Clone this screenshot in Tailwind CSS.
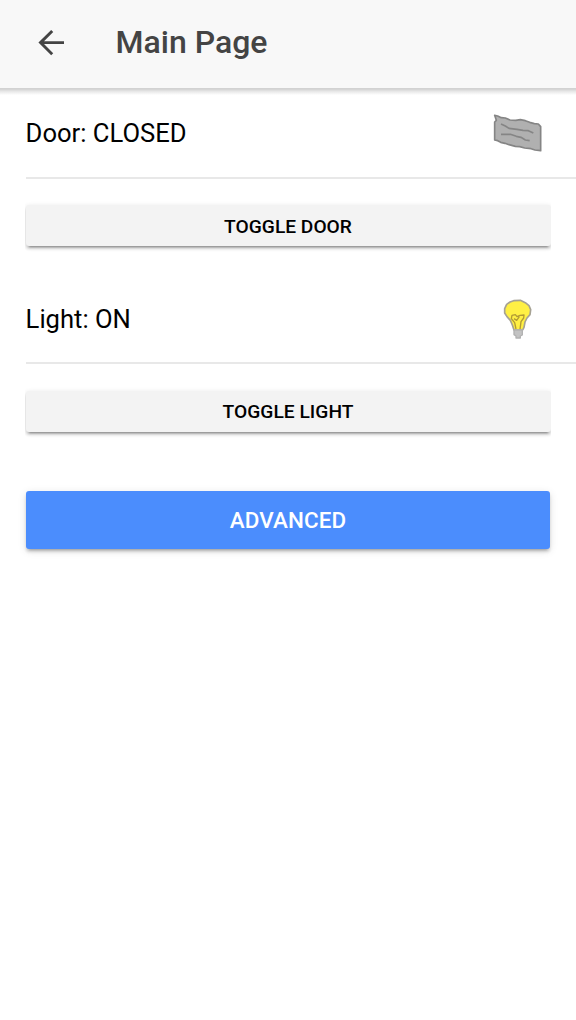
<!DOCTYPE html>
<html lang="en">
<head>
<meta charset="utf-8">
<title>Main Page</title>
<script src="https://cdn.jsdelivr.net/npm/@tailwindcss/browser@4"></script>
</head>
<body class="bg-white text-black font-[Roboto,sans-serif] min-h-screen overflow-hidden">
<header class="flex items-center h-[88px] bg-[#f8f8f8] text-[#444444]">
  <button class="ml-[37px] w-[28px] h-[28px] -mt-[4px]" aria-label="Back">
    <svg class="block" width="28" height="28" viewBox="0 0 28 28" fill="none" stroke="currentColor" stroke-width="2.9"><path d="M27 14.6H3.5M15.2 3 3.5 14.6l11.7 11.6"/></svg>
  </button>
  <h1 class="ml-[50.5px] -mt-[5px] text-[32px] leading-[40px] font-medium whitespace-nowrap">Main Page</h1>
</header>
<div class="h-[7px] bg-linear-to-b from-[#d2d2d2] from-15% via-[#e8e8e8] via-50% to-white"></div>
<main class="-mt-[7px]">
  <section class="pl-[25.6px]">
    <div class="flex items-center justify-between h-[91px] border-b-2 border-[#e8e8e8] text-[25.6px]">
      <span class="pt-[2px]">Door: CLOSED</span>
      <svg class="mr-[25px] mt-[1px]" width="66" height="56" viewBox="0 0 198 168" fill="none" stroke="#858585" stroke-width="5" stroke-linejoin="round"><path fill="#b0b0b0" d="M29 31 38 33 49 38 61 39 75 45 92 46 106 44 121 47 134 52 148 56 160 57 167 65V137L150 135 138 131 119 129 104 125 91 124 72 119 60 115 47 112 38 107 29 105V51L34 46Z"/><path d="m48 57 13 6 11 7 24 3 18 3 16 1 15 7M48 88H76L94 94 108 97 121 105 134 107"/></svg>
    </div>
  </section>
  <div class="px-[25px] pt-[19px] h-[94px]">
    <div class="overflow-hidden pt-[7px] pb-[8px] px-[0.5px]">
      <button class="block w-full h-[41px] pt-[4px] rounded-[3px] bg-[#f3f3f3] text-[19.2px] font-medium shadow-[0_3px_3px_rgba(0,0,0,0.14),0_4px_2px_-3px_rgba(0,0,0,0.35),0_1px_5px_rgba(0,0,0,0.12)]">TOGGLE DOOR</button>
    </div>
  </div>
  <section class="pl-[25.6px]">
    <div class="flex items-center justify-between h-[91px] border-b-2 border-[#e8e8e8] text-[25.6px]">
      <span class="pt-[4px]">Light: ON</span>
      <svg class="mr-[30px]" width="56" height="56" viewBox="0 0 168 168" fill="none" stroke-linejoin="round"><path fill="#fff044" stroke="#a6a294" stroke-width="5" d="M71 32 91 31 106 38 117 47 122 59 120 74 111 84 105 96 102 112 98 120H72L67 105 61 91 51 80 44 69V56L50 43 60 36Z"/><path stroke="#b29b34" stroke-width="4" d="M78 117 74 98 64 86 66 76 76 74 81 80 90 76 102 75 101 84 93 95 90 118M72 86 80 91 88 80"/><path fill="#c3c3c3" stroke="#b2b2b2" stroke-width="4" d="M72 120H97V135L91 138V144H78V138L72 134Z"/></svg>
    </div>
  </section>
  <div class="px-[25px] pt-[20px] h-[95px]">
    <div class="overflow-hidden pt-[7px] pb-[8px] px-[0.5px]">
      <button class="block w-full h-[41px] pt-[2px] rounded-[3px] bg-[#f3f3f3] text-[19.2px] tracking-[0.03px] font-medium shadow-[0_3px_3px_rgba(0,0,0,0.14),0_4px_2px_-3px_rgba(0,0,0,0.35),0_1px_5px_rgba(0,0,0,0.12)]">TOGGLE LIGHT</button>
    </div>
  </div>
  <div class="px-[25.6px] pt-[32px]">
    <button class="block w-full h-[57.6px] pt-[2px] rounded-[3px] bg-[#4b8dfd] text-white text-[22.4px] tracking-[0.1px] font-medium shadow-[0_3px_3px_rgba(0,0,0,0.14),0_4px_2px_-3px_rgba(0,0,0,0.2),0_2px_8px_rgba(0,0,0,0.12)]">ADVANCED</button>
  </div>
</main>
</body>
</html>
